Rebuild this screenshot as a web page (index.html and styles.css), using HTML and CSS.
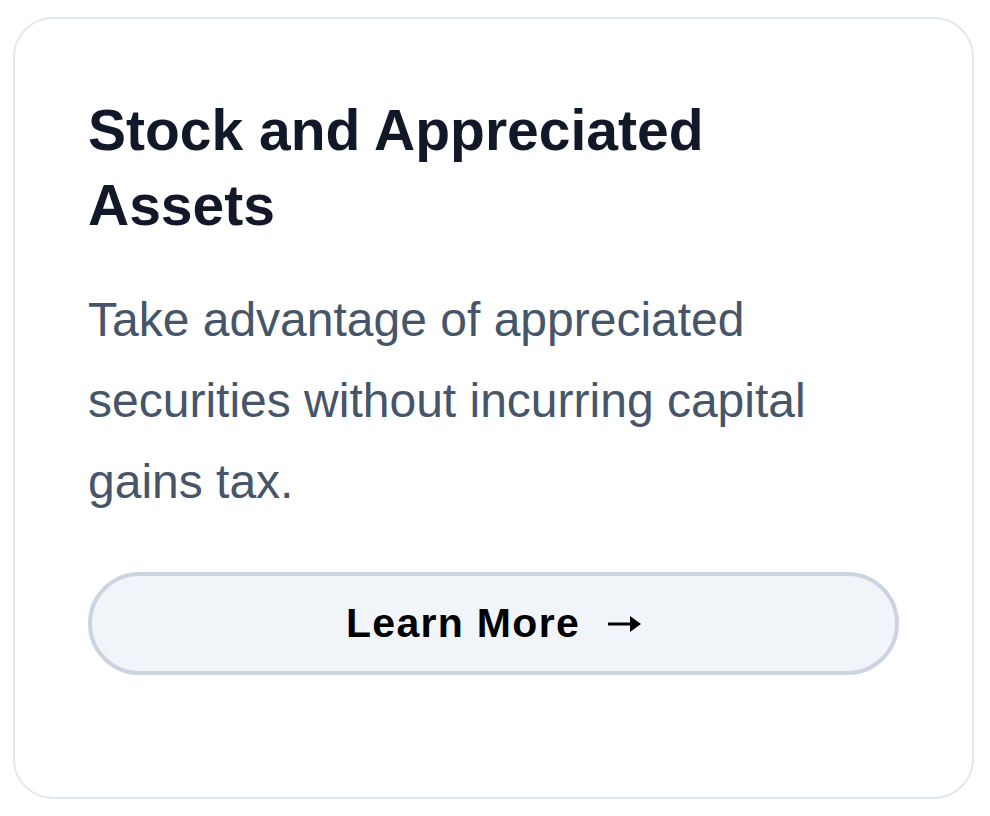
FILE: index.html
```html
<!DOCTYPE html>
<html lang="en">
<head>
<meta charset="utf-8">
<title>Stock and Appreciated Assets</title>
<link rel="stylesheet" href="styles.css">
</head>
<body>
  <div class="card">
    <h2 class="card-title">Stock and Appreciated Assets</h2>
    <p class="card-text">Take advantage of appreciated securities without incurring capital gains tax.</p>
    <a class="btn" href="#">
      <span class="btn-label">Learn More</span>
      <svg class="btn-arrow" width="33" height="18" viewBox="0 0 33 18" aria-hidden="true">
        <rect x="0" y="7.5" width="23" height="3" fill="#000"/>
        <polygon points="22,1 33,9 22,17" fill="#000"/>
      </svg>
    </a>
  </div>
</body>
</html>
```

FILE: styles.css
```css
html, body {
  margin: 0;
  padding: 0;
  background: #ffffff;
}

body {
  font-family: "Liberation Sans", Arial, Helvetica, sans-serif;
  padding: 17px 0 0 13px;
}

.card {
  box-sizing: border-box;
  width: 961px;
  height: 782px;
  border: 2px solid #e2e8f0;
  border-radius: 40px;
  background: #ffffff;
  padding: 74px 73px 0 73px;
}

.card-title {
  margin: 0;
  max-width: 760px;
  font-size: 57px;
  line-height: 75px;
  font-weight: 700;
  color: #111827;
}

.card-text {
  margin: 36px 0 0 0;
  font-size: 48px;
  line-height: 81px;
  font-weight: 400;
  color: #475569;
}

.btn {
  box-sizing: border-box;
  margin-top: 50px;
  display: flex;
  align-items: center;
  justify-content: center;
  gap: 28px;
  height: 103px;
  border: 4px solid #cbd5e1;
  border-radius: 52px;
  background: #f1f5f9;
  color: #000000;
  text-decoration: none;
}

.btn-label {
  font-size: 41px;
  font-weight: 700;
  letter-spacing: 1.3px;
  line-height: 1;
}

.btn-arrow {
  display: block;
  flex: none;
}
```
